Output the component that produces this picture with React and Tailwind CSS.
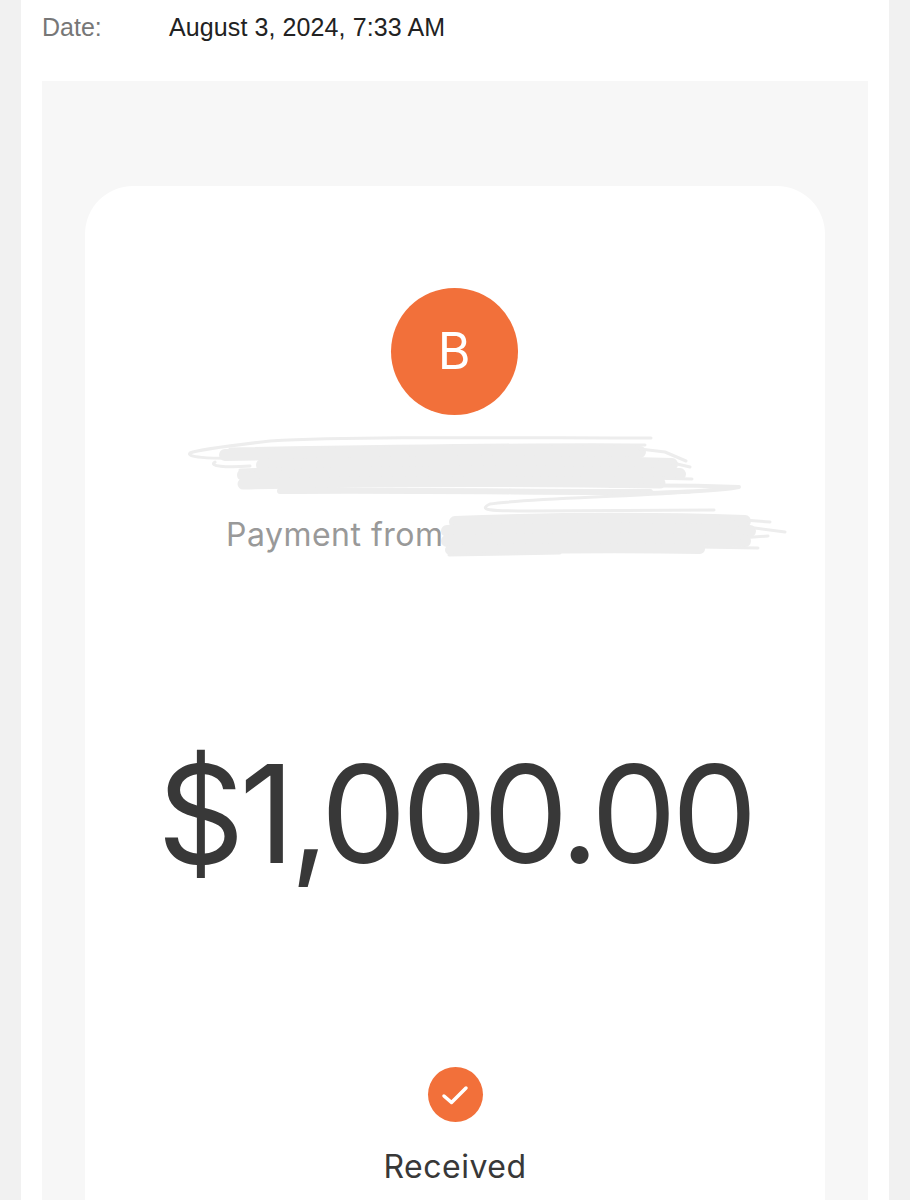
export default function App() {
  return (
    <div className="h-[1200px] overflow-hidden bg-[#f1f1f1] px-[21px]">
      <div className="h-full bg-white px-[21px]">
        {/* date row */}
        <div className="flex h-[81px] pt-[13px] text-[25px] leading-[28px] font-['Liberation_Sans',sans-serif]">
          <span className="w-[127px] text-[#777777]">Date:</span>
          <span className="tracking-[0.1px] text-[#222222]">August 3, 2024, 7:33 AM</span>
        </div>

        <div className="h-full bg-[#f7f7f7] px-[43px] pt-[105px]">
          <div className="relative flex h-[1100px] flex-col items-center rounded-t-[48px] bg-white pt-[102px] font-['Inter',sans-serif]">
            <div className="mr-[2px] flex h-[127px] w-[127px] items-center justify-center rounded-full bg-[#f2703a] text-[50px] font-normal text-white">
              B
            </div>

            <div className="mt-[100px] w-full pl-[141px] text-[32px] leading-[40px] tracking-[0.5px] text-[#999999]">
              Payment from
            </div>

            <div className="mt-[175px] text-[136px] leading-[168px] tracking-[-4.9px] text-[#383838]">
              $1,000.00
            </div>

            <div className="mt-[169px] flex h-[55px] w-[55px] items-center justify-center rounded-full bg-[#f2703a]">
              <svg width="28" height="28" viewBox="0 0 28 28" fill="none" stroke="white" strokeWidth="3.5" strokeLinecap="round" strokeLinejoin="round">
                <path d="M3 15 L10.5 21.5 L25 7" />
              </svg>
            </div>
            <div className="mt-[25px] text-[32px] leading-[40px] tracking-[0.5px] text-[#383838]">Received</div>

            {/* scribbled-out name and account */}
            <svg className="absolute left-0 top-0" width="740" height="400" viewBox="85 186 740 400" fill="none" stroke="#ededed" strokeLinecap="round" strokeLinejoin="round">
              <path strokeWidth="3" d="M651 438 C520 438 360 436 270 441 C235 445 200 449 190 453 C186 457 205 459 250 458" />
              <path strokeWidth="3" d="M230 449 C400 446 560 444 645 445 M215 462 C208 466 225 468 250 466" />
              <path strokeWidth="12" d="M225 455 C380 452 540 451 640 452" />
              <path strokeWidth="12" d="M262 465 C380 462 540 460 672 464" />
              <path strokeWidth="12" d="M243 475 C380 472 540 470 680 474" />
              <path strokeWidth="11" d="M243 484 C380 481 540 481 660 483" />
              <path strokeWidth="6" d="M280 491 C400 490 540 492 650 492" />
              <path strokeWidth="3" d="M240 470 L300 468 M640 449 L665 452 L686 461 M660 460 L690 467 M650 478 L692 479" />
              <path strokeWidth="4" d="M610 486 C660 485 710 486 739 487 C720 491 660 493 610 494" />
              <path strokeWidth="3" d="M690 492 C620 497 520 499 490 504 C478 510 488 511 530 511 L714 510" />
              <path strokeWidth="12" d="M455 522 C560 518 660 518 745 521" />
              <path strokeWidth="12" d="M447 531 C560 528 660 528 750 531" />
              <path strokeWidth="12" d="M447 541 C560 538 660 538 745 541" />
              <path strokeWidth="10" d="M450 550 C560 548 640 548 700 549" />
              <path strokeWidth="3" d="M449 555 L560 553 M730 519 L770 522 M740 526 L785 532 M740 538 L768 536 M700 547 L758 548" />
            </svg>
          </div>
        </div>
      </div>
    </div>
  )
}
